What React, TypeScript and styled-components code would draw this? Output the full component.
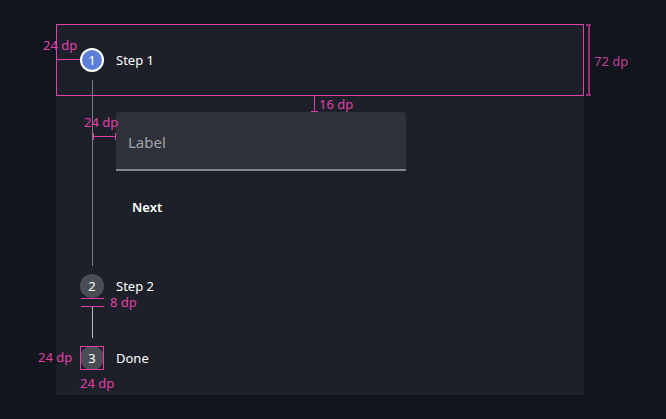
import React from "react";
import styled, { createGlobalStyle } from "styled-components";

const pink = "#e23fa9";
const pinkDim = "#9a2d74";

const GlobalStyle = createGlobalStyle`
    html, body {
        margin: 0;
        padding: 0;
        background: #11151e;
    }
    body {
        font-family: "Noto Sans", "Open Sans", sans-serif;
        width: 666px;
        height: 419px;
        overflow: hidden;
    }
`

type StepState = "active" | "idle"

const steps: Array<{ n: number, title: string, state: StepState }> = [
    { n: 1, title: "Step 1", state: "active" },
    { n: 2, title: "Step 2", state: "idle" },
    { n: 3, title: "Done", state: "idle" },
]

const App = () => {
    return (
        <>
            <GlobalStyle />
            <Page>
                <Panel>
                    <StepRow>
                        <Circle state={steps[0].state}>{steps[0].n}</Circle>
                        <Title>{steps[0].title}</Title>
                    </StepRow>
                    <Segment>
                        <Rail><Line /></Rail>
                        <Content>
                            <Field>
                                <FieldLabel>Label</FieldLabel>
                            </Field>
                            <NextButton>Next</NextButton>
                        </Content>
                    </Segment>
                    <StepRow>
                        <Circle state={steps[1].state}>{steps[1].n}</Circle>
                        <Title>{steps[1].title}</Title>
                    </StepRow>
                    <Segment short>
                        <Rail><Line light /></Rail>
                    </Segment>
                    <StepRow>
                        <Circle state={steps[2].state}>{steps[2].n}</Circle>
                        <Title>{steps[2].title}</Title>
                    </StepRow>

                    {/* redline annotations */}
                    <SpecBox style={{ left: 0, top: 0, width: 528, height: 72 }} />
                    <VBracket style={{ left: 530, top: 0, height: 72 }} />
                    <SpecText dim style={{ left: 538, top: 28 }}>72 dp</SpecText>

                    <HTick style={{ left: 0, top: 35, width: 24 }} />
                    <SpecText style={{ left: -13, top: 12 }}>24 dp</SpecText>

                    <VTick style={{ left: 258, top: 72, height: 16 }} />
                    <SpecText style={{ left: 263, top: 71 }}>16 dp</SpecText>

                    <HBracket style={{ left: 37, top: 109, width: 23 }} />
                    <SpecText style={{ left: 28, top: 89 }}>24 dp</SpecText>

                    <HTick style={{ left: 25, top: 274, width: 23 }} />
                    <HTick style={{ left: 25, top: 282, width: 23 }} />
                    <SpecText style={{ left: 54, top: 269 }}>8 dp</SpecText>

                    <SpecBox style={{ left: 24, top: 322, width: 24, height: 24 }} />
                    <SpecText style={{ left: -18, top: 324 }}>24 dp</SpecText>
                    <SpecText style={{ left: 24, top: 350 }}>24 dp</SpecText>
                </Panel>
            </Page>
        </>
    )
}

export default App;

const Page = styled.div`
    padding: 24px 0 0 56px;
`

const Panel = styled.div`
    position: relative;
    width: 528px;
    height: 371px;
    box-sizing: border-box;
    padding: 24px 0 0 24px;
    background: #1d2029;
`

const StepRow = styled.div`
    display: flex;
    align-items: center;
    gap: 12px;
    height: 24px;
`

const Circle = styled.div<{ state: StepState }>`
    width: 24px;
    height: 24px;
    box-sizing: border-box;
    border-radius: 50%;
    display: flex;
    align-items: center;
    justify-content: center;
    font-size: 13px;
    color: #ffffff;
    background: ${props => props.state === "active" ? "#5b7fd8" : "#4b4d54"};
    border: ${props => props.state === "active" ? "2px solid #ffffff" : "none"};
`

const Title = styled.span`
    font-size: 13px;
    color: #ffffff;
`

const Segment = styled.div<{ short?: boolean }>`
    display: flex;
    gap: 12px;
    height: ${props => props.short ? "48px" : "202px"};
`

const Rail = styled.div`
    width: 24px;
    flex: none;
    display: flex;
    justify-content: center;
    padding: 8px 0;
    box-sizing: border-box;
`

const Line = styled.div<{ light?: boolean }>`
    width: 1px;
    height: 100%;
    background: ${props => props.light ? "#b9bbc0" : "#7a7c82"};
`

const Content = styled.div`
    display: flex;
    flex-direction: column;
    align-items: flex-start;
    padding-top: 40px;
`

const Field = styled.div`
    width: 290px;
    height: 59px;
    box-sizing: border-box;
    background: #2e3139;
    border-radius: 4px 4px 0 0;
    border-bottom: 2px solid #85878c;
    display: flex;
    align-items: center;
    padding: 2px 0 0 12px;
`

const FieldLabel = styled.span`
    font-size: 15px;
    color: #a3a5ab;
`

const NextButton = styled.button`
    margin-top: 18px;
    height: 36px;
    padding: 0 16px;
    border: none;
    background: transparent;
    color: #ffffff;
    font-family: "Noto Sans", sans-serif;
    font-size: 13px;
    font-weight: 600;
`

const SpecBox = styled.div`
    position: absolute;
    box-sizing: border-box;
    border: 1px solid ${pink};
    pointer-events: none;
`

const SpecText = styled.span<{ dim?: boolean }>`
    position: absolute;
    font-size: 13px;
    line-height: 18px;
    white-space: nowrap;
    color: ${props => props.dim ? "#c2409a" : pink};
`

const HTick = styled.div`
    position: absolute;
    height: 1px;
    background: ${pink};
`

const VTick = styled.div`
    position: absolute;
    width: 1px;
    background: ${pink};
    &::after {
        content: "";
        position: absolute;
        left: -3px;
        bottom: 0;
        width: 7px;
        height: 1px;
        background: ${pink};
    }
`

const HBracket = styled.div`
    position: absolute;
    height: 7px;
    box-sizing: border-box;
    border-left: 1px solid ${pink};
    border-right: 1px solid ${pink};
    &::after {
        content: "";
        position: absolute;
        left: 0;
        right: 0;
        top: 3px;
        height: 1px;
        background: ${pink};
    }
`

const VBracket = styled.div`
    position: absolute;
    width: 5px;
    box-sizing: border-box;
    border-top: 2px solid ${pinkDim};
    border-bottom: 2px solid ${pinkDim};
    &::after {
        content: "";
        position: absolute;
        top: 0;
        bottom: 0;
        left: 2px;
        width: 2px;
        background: ${pinkDim};
    }
`
